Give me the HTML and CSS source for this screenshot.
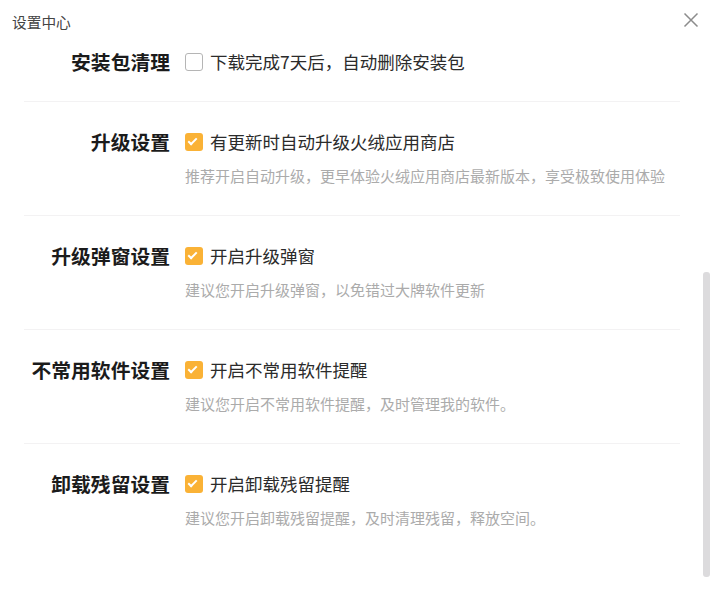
FILE: index.html
```html
<!DOCTYPE html>
<html lang="zh-CN">
<head>
  <meta charset="UTF-8" />
  <title>设置中心</title>
  <link rel="stylesheet" href="styles.css">
</head>
<body>
  <div class="dialog">
    <!-- Header -->
    <header class="dialog-header">
      <div class="dialog-title">设置中心</div>
      <button class="close-btn" aria-label="关闭">
        <svg width="16" height="16" viewBox="0 0 16 16">
          <path d="M1.5 1.5 L14.5 14.5 M14.5 1.5 L1.5 14.5" stroke="#8c8c8c" stroke-width="1.5" fill="none" />
        </svg>
      </button>
    </header>

    <!-- Settings list -->
    <div class="settings-view">
      <div class="settings-list">
        <div class="setting-row first">
          <div class="setting-label">安装包清理</div>
          <div class="setting-body">
            <label class="option">
              <span class="checkbox"></span>
              <span class="option-text">下载完成7天后，自动删除安装包</span>
            </label>
          </div>
        </div>

        <div class="setting-row">
          <div class="setting-label">升级设置</div>
          <div class="setting-body">
            <label class="option">
              <span class="checkbox checked"></span>
              <span class="option-text">有更新时自动升级火绒应用商店</span>
            </label>
            <p class="setting-desc">推荐开启自动升级，更早体验火绒应用商店最新版本，享受极致使用体验</p>
          </div>
        </div>

        <div class="setting-row">
          <div class="setting-label">升级弹窗设置</div>
          <div class="setting-body">
            <label class="option">
              <span class="checkbox checked"></span>
              <span class="option-text">开启升级弹窗</span>
            </label>
            <p class="setting-desc">建议您开启升级弹窗，以免错过大牌软件更新</p>
          </div>
        </div>

        <div class="setting-row">
          <div class="setting-label">不常用软件设置</div>
          <div class="setting-body">
            <label class="option">
              <span class="checkbox checked"></span>
              <span class="option-text">开启不常用软件提醒</span>
            </label>
            <p class="setting-desc">建议您开启不常用软件提醒，及时管理我的软件。</p>
          </div>
        </div>

        <div class="setting-row">
          <div class="setting-label">卸载残留设置</div>
          <div class="setting-body">
            <label class="option">
              <span class="checkbox checked"></span>
              <span class="option-text">开启卸载残留提醒</span>
            </label>
            <p class="setting-desc">建议您开启卸载残留提醒，及时清理残留，释放空间。</p>
          </div>
        </div>
      </div>

      <!-- Scrollbar thumb -->
      <div class="scroll-thumb"></div>
    </div>
  </div>
</body>
</html>
```

FILE: styles.css
```css
/* Base Reset */
*, *::before, *::after {
  box-sizing: border-box;
  margin: 0;
  padding: 0;
}
body {
  font-family: "Noto Sans CJK SC", "Noto Sans", sans-serif;
  background: #fff;
  color: #333;
}

/* Dialog */
.dialog {
  width: 714px;
  height: 599px;
  background: #fff;
  overflow: hidden;
}
.dialog-header {
  height: 44px;
  display: flex;
  align-items: center;
  justify-content: space-between;
  padding: 0 15px 0 12px;
}
.dialog-title {
  font-size: 14.7px;
  color: #444;
  line-height: 20px;
}
.close-btn {
  border: none;
  background: none;
  width: 16px;
  height: 16px;
  margin-top: -4px;
  cursor: pointer;
  display: flex;
}

/* Scrollable area */
.settings-view {
  position: relative;
  height: 536px;
  overflow: hidden;
}
.settings-list {
  padding: 0 34px 0 24px;
}
.scroll-thumb {
  position: absolute;
  right: 4px;
  top: 228px;
  width: 7px;
  height: 305px;
  border-radius: 3px;
  background: #dcdbdd;
}

/* Setting rows */
.setting-row {
  display: flex;
  padding: 26px 0 28px;
  border-bottom: 1px solid #f3f2f3;
}
.setting-row.first {
  padding: 4px 0 25px;
}
.setting-row:last-child {
  border-bottom: none;
}
.setting-label {
  width: 146px;
  flex-shrink: 0;
  text-align: right;
  font-size: 19.8px;
  font-weight: 700;
  color: #1b1b1b;
  line-height: 28px;
  white-space: nowrap;
}
.setting-body {
  padding-left: 15px;
}
.option {
  display: flex;
  align-items: center;
  height: 28px;
  cursor: pointer;
}
.checkbox {
  width: 18px;
  height: 18px;
  border: 1.5px solid #b5b5b5;
  border-radius: 3px;
  background: #fff;
  margin-right: 7px;
  position: relative;
}
.checkbox.checked {
  border: none;
  background: #fab236;
}
.checkbox.checked::after {
  content: "";
  position: absolute;
  left: 5px;
  top: 3px;
  width: 5px;
  height: 9px;
  border: solid #fff;
  border-width: 0 2px 2px 0;
  transform: rotate(45deg);
}
.option-text {
  font-size: 17.5px;
  color: #2b2b2b;
  line-height: 28px;
  white-space: nowrap;
}
.setting-desc {
  margin-top: 9px;
  font-size: 15px;
  line-height: 22px;
  color: #ababab;
  white-space: nowrap;
}
```
